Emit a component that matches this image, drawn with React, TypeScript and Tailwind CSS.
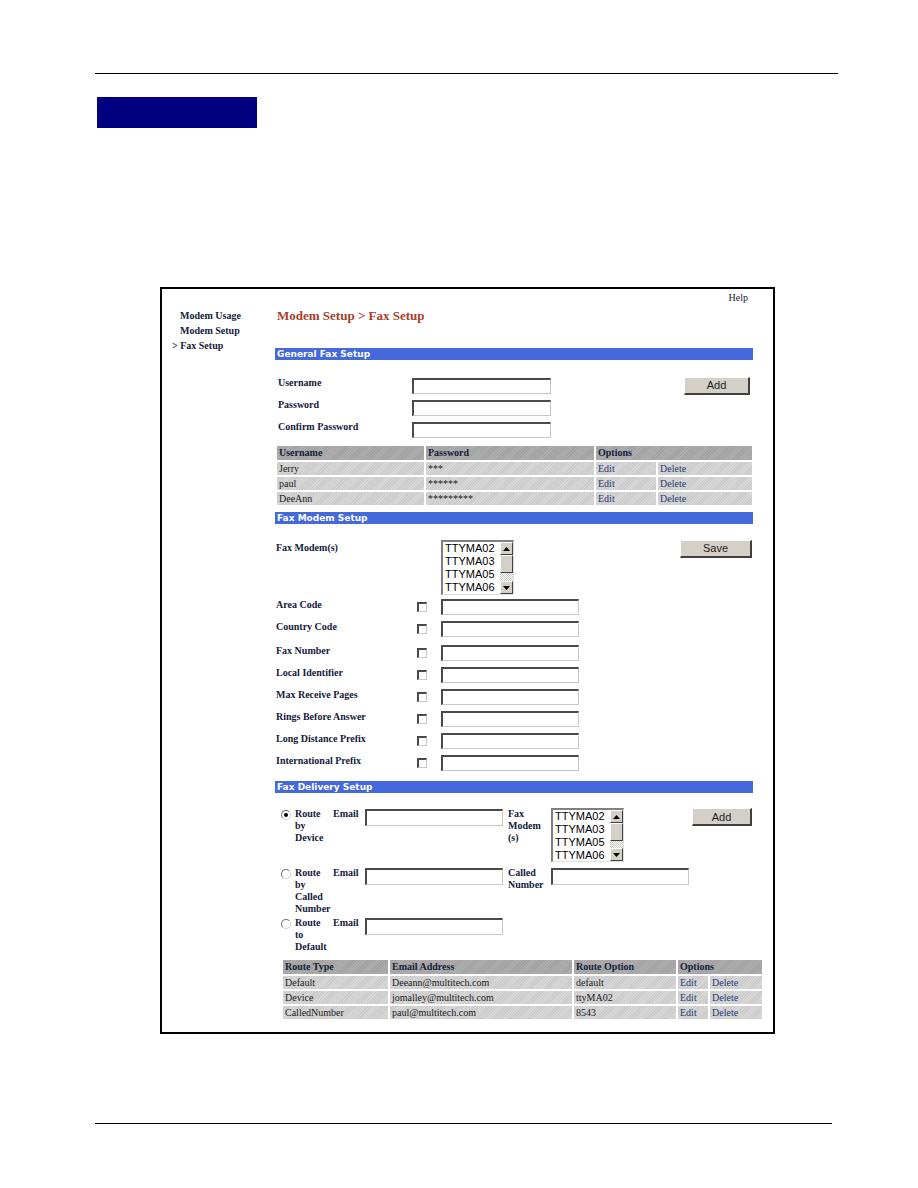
import React from 'react'

const items = ['TTYMA02', 'TTYMA03', 'TTYMA05', 'TTYMA06']

const inputCls =
  'bg-white border-t-2 border-l-2 border-t-[#4a4a4a] border-l-[#4a4a4a] border-b border-r border-b-[#c8c8c8] border-r-[#c8c8c8]'

const sans = 'font-[family-name:Liberation_Sans,Arial,sans-serif]'

function Bar({ title }: { title: string }) {
  return (
    <div className="w-[478px] h-[12px] bg-[#4469dd] pl-[2px] text-white text-[9px] leading-[12px] font-bold font-[family-name:DejaVu_Sans,sans-serif]">
      {title}
    </div>
  )
}

function Arrow({ up }: { up?: boolean }) {
  return (
    <div className="w-[13px] h-[13px] bg-[#d4d0c8] border border-t-white border-l-white border-b-[#404040] border-r-[#404040] flex items-center justify-center">
      <svg width="7" height="4" viewBox="0 0 7 4">
        <polygon points={up ? '0,4 7,4 3.5,0' : '0,0 7,0 3.5,4'} fill="#000" />
      </svg>
    </div>
  )
}

function ListBox({ className }: { className: string }) {
  return (
    <div
      className={`flex bg-white border-t-2 border-l-2 border-t-[#808080] border-l-[#808080] border-b border-r border-b-[#e0e0e0] border-r-[#e0e0e0] ${className}`}
    >
      <div className={`flex-1 pl-[2px] ${sans} text-[11px] leading-[13px] font-normal text-black overflow-hidden`}>
        {items.map((i) => (
          <div key={i}>{i}</div>
        ))}
      </div>
      <div className="w-[13px] flex flex-col">
        <Arrow up />
        <div className="h-[18px] bg-[#d4d0c8] border border-t-white border-l-white border-b-[#404040] border-r-[#404040]" />
        <div className="flex-1 bg-[repeating-conic-gradient(#c8c8c8_0_25%,#ffffff_0_50%)] bg-[length:2px_2px]" />
        <Arrow />
      </div>
    </div>
  )
}

function Btn({ label }: { label: string }) {
  return (
    <div
      className={`w-full h-full flex items-center justify-center bg-[#d4d0c8] border border-t-white border-l-white border-b-2 border-r-2 border-b-[#404040] border-r-[#404040] ${sans} text-[11px] font-normal text-[#222]`}
    >
      {label}
    </div>
  )
}

function Radio({ on }: { on?: boolean }) {
  return (
    <div className="w-[10px] h-[10px] rounded-full bg-white border border-t-[#707070] border-l-[#707070] border-b-[#d0d0d0] border-r-[#d0d0d0] flex items-center justify-center">
      {on && <div className="w-[4px] h-[4px] rounded-full bg-black" />}
    </div>
  )
}

const headCell =
  'h-[14px] pl-[2px] text-[10px] leading-[14px] font-bold text-[#14203c] bg-[repeating-linear-gradient(135deg,#a2a2a2_0_1px,#aeaeae_1px_2px)]'
const rowCell =
  'h-[13px] pl-[2px] text-[10px] leading-[13px] text-[#1a1a1a] bg-[repeating-linear-gradient(135deg,#cbcbcb_0_1px,#d8d8d8_1px_2px)]'
const linkCell =
  'h-[13px] pl-[2px] text-[10px] leading-[13px] text-[#283a72] bg-[repeating-linear-gradient(135deg,#cbcbcb_0_1px,#d8d8d8_1px_2px)]'

const users = [
  ['Jerry', '***'],
  ['paul', '******'],
  ['DeeAnn', '*********'],
]

const fields: [string, string][] = [
  ['Area Code', 'mt-[4px]'],
  ['Country Code', 'mt-[6px]'],
  ['Fax Number', 'mt-[8px]'],
  ['Local Identifier', 'mt-[6px]'],
  ['Max Receive Pages', 'mt-[6px]'],
  ['Rings Before Answer', 'mt-[6px]'],
  ['Long Distance Prefix', 'mt-[6px]'],
  ['International Prefix', 'mt-[6px]'],
]

const routes = [
  ['Default', 'Deeann@multitech.com', 'default'],
  ['Device', 'jomalley@multitech.com', 'ttyMA02'],
  ['CalledNumber', 'paul@multitech.com', '8543'],
]

export default function App() {
  return (
    <div className="w-[918px] h-[1188px] bg-white flex flex-col font-[family-name:Liberation_Serif,serif] overflow-hidden">
      <div className="mt-[73px] ml-[95px] w-[743px] h-px bg-black" />
      <div className="mt-[23px] ml-[97px] w-[160px] h-[31px] bg-[#000080]" />

      <div className="mt-[159px] ml-[160px] w-[615px] h-[747px] border-2 border-black flex">
        {/* left nav */}
        <div className="w-[113px] pt-[19px] text-[10px] leading-[15px] font-bold text-[#14203c]">
          <div className="pl-[18px]">Modem Usage</div>
          <div className="pl-[18px]">Modem Setup</div>
          <div className="pl-[10px]">&gt; Fax Setup</div>
        </div>

        {/* main */}
        <div className="w-[487px] flex flex-col text-[#14203c]">
          <div className="pt-[3px] h-[15px] flex justify-end pr-[14px] text-[10px] leading-[12px]">Help</div>
          <div className="mt-[4px] ml-[2px] text-[13px] leading-[16px] font-bold text-[#a8402c]">
            Modem Setup &gt; Fax Setup
          </div>

          <div className="mt-[24px]">
            <Bar title="General Fax Setup" />
          </div>

          {/* general fax setup form */}
          <div className="mt-[17px] w-[478px] flex">
            <div className="flex flex-col">
              {['Username', 'Password', 'Confirm Password'].map((l, i) => (
                <div key={l} className={`flex h-[17px] ${i > 0 ? 'mt-[5px]' : ''}`}>
                  <div className="w-[137px] pl-[3px] text-[10px] leading-[12px] font-bold">{l}</div>
                  <div className={`mt-[1px] w-[139px] h-[16px] ${inputCls}`} />
                </div>
              ))}
            </div>
            <div className="ml-auto mr-[3px] w-[66px] h-[18px]">
              <Btn label="Add" />
            </div>
          </div>

          <div className="mt-[8px] ml-[2px] w-[475px] grid grid-cols-[147px_168px_60px_94px] gap-[2px]">
            <div className={headCell}>Username</div>
            <div className={headCell}>Password</div>
            <div className={`${headCell} col-span-2`}>Options</div>
            {users.map(([u, p]) => (
              <React.Fragment key={u}>
                <div className={rowCell}>{u}</div>
                <div className={rowCell}>{p}</div>
                <div className={linkCell}>Edit</div>
                <div className={linkCell}>Delete</div>
              </React.Fragment>
            ))}
          </div>

          <div className="mt-[7px]">
            <Bar title="Fax Modem Setup" />
          </div>

          {/* fax modem setup */}
          <div className="mt-[16px] w-[478px] flex">
            <div className="w-[166px] pl-[1px] pt-[2px] text-[10px] leading-[12px] font-bold">Fax Modem(s)</div>
            <ListBox className="w-[73px] h-[55px]" />
            <div className="ml-auto mr-[1px] w-[72px] h-[18px]">
              <Btn label="Save" />
            </div>
          </div>

          {fields.map(([l, m]) => (
            <div key={l} className={`flex h-[16px] ${m}`}>
              <div className="w-[142px] pl-[1px] text-[10px] leading-[12px] font-bold whitespace-nowrap">{l}</div>
              <div className={`mt-[3px] w-[10px] h-[10px] ${inputCls}`} />
              <div className={`ml-[14px] w-[138px] h-[16px] ${inputCls}`} />
            </div>
          ))}

          <div className="mt-[10px]">
            <Bar title="Fax Delivery Setup" />
          </div>

          {/* fax delivery setup */}
          <div className="mt-[15px] w-[478px] flex text-[10px] leading-[12px] font-bold">
            <div className="pl-[6px] pt-[2px]">
              <Radio on />
            </div>
            <div className="ml-[4px] w-[38px]">
              Route
              <br />
              by
              <br />
              Device
            </div>
            <div className="w-[32px]">Email</div>
            <div className={`mt-[1px] w-[138px] h-[17px] ${inputCls}`} />
            <div className="ml-[5px] w-[43px]">
              Fax
              <br />
              Modem
              <br />
              (s)
            </div>
            <ListBox className="w-[73px] h-[54px]" />
            <div className="ml-auto mr-[1px] w-[60px] h-[18px]">
              <Btn label="Add" />
            </div>
          </div>

          <div className="mt-[5px] w-[478px] flex text-[10px] leading-[12px] font-bold">
            <div className="pl-[6px] pt-[2px]">
              <Radio />
            </div>
            <div className="ml-[4px] w-[38px]">
              Route
              <br />
              by
              <br />
              Called
              <br />
              Number
            </div>
            <div className="w-[32px]">Email</div>
            <div className={`mt-[1px] w-[138px] h-[17px] ${inputCls}`} />
            <div className="ml-[5px] w-[43px]">
              Called
              <br />
              Number
            </div>
            <div className={`mt-[1px] w-[138px] h-[17px] ${inputCls}`} />
          </div>

          <div className="mt-[2px] w-[478px] flex text-[10px] leading-[12px] font-bold">
            <div className="pl-[6px] pt-[2px]">
              <Radio />
            </div>
            <div className="ml-[4px] w-[38px]">
              Route
              <br />
              to
              <br />
              Default
            </div>
            <div className="w-[32px]">Email</div>
            <div className={`mt-[1px] w-[138px] h-[17px] ${inputCls}`} />
          </div>

          <div className="mt-[7px] ml-[8px] w-[479px] grid grid-cols-[105px_182px_102px_30px_52px] gap-[2px]">
            <div className={headCell}>Route Type</div>
            <div className={headCell}>Email Address</div>
            <div className={headCell}>Route Option</div>
            <div className={`${headCell} col-span-2`}>Options</div>
            {routes.map(([t, e, o]) => (
              <React.Fragment key={t}>
                <div className={rowCell}>{t}</div>
                <div className={rowCell}>{e}</div>
                <div className={rowCell}>{o}</div>
                <div className={linkCell}>Edit</div>
                <div className={linkCell}>Delete</div>
              </React.Fragment>
            ))}
          </div>
        </div>
      </div>

      <div className="mt-[89px] ml-[95px] w-[737px] h-px bg-black" />
    </div>
  )
}
